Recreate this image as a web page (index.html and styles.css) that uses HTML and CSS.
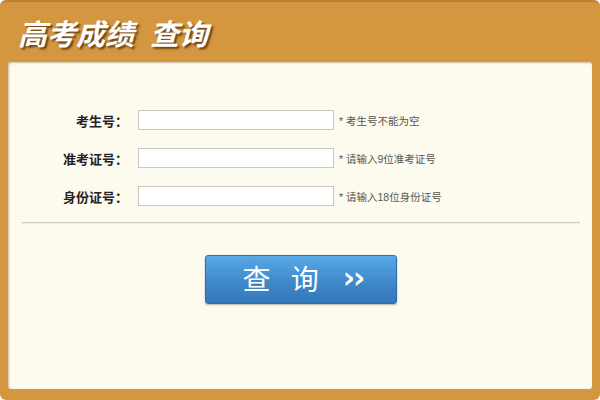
FILE: index.html
```html
<!DOCTYPE html>
<html lang="zh-CN">
<head>
  <meta charset="UTF-8" />
  <title>高考成绩查询</title>
  <link rel="stylesheet" href="styles.css">
</head>
<body>

  <div class="frame">
    <header>
      <h1>高考成绩&nbsp;&nbsp;查询</h1>
    </header>

    <div class="panel">
      <form class="query-form">
        <label for="ksh">考生号：</label>
        <input type="text" id="ksh">
        <span class="hint">* 考生号不能为空</span>

        <label for="zkzh">准考证号：</label>
        <input type="text" id="zkzh">
        <span class="hint">* 请输入9位准考证号</span>

        <label for="sfzh">身份证号：</label>
        <input type="text" id="sfzh">
        <span class="hint">* 请输入18位身份证号</span>
      </form>

      <hr class="divider">

      <button class="query-btn" type="button">查<span class="sp"></span>询<span class="arrows">&rsaquo;&rsaquo;</span></button>
    </div>
  </div>

</body>
</html>
```

FILE: styles.css
```css
body {
  margin: 0;
  font-family: "Liberation Sans", "Noto Sans CJK SC", sans-serif;
  background: #ffffff;
}

.frame {
  width: 600px;
  height: 400px;
  box-sizing: border-box;
  padding: 0 8px 11px;
  background: #d4963f;
  border-top: 2px solid #b98033;
  border-radius: 6px;
  display: flex;
  flex-direction: column;
}

header {
  height: 60px;
  display: flex;
  align-items: center;
}

header h1 {
  margin: 0 0 0 10px;
  font-size: 29px;
  font-style: italic;
  font-weight: bold;
  color: #ffffff;
  text-shadow: 2px 2px 2px rgba(70, 40, 10, 0.75);
}

.panel {
  flex: 1;
  background: #fdfaee;
  border-radius: 3px;
  box-shadow: inset 1px 1px 2px rgba(120, 80, 20, 0.35);
  padding-top: 48px;
  display: flex;
  flex-direction: column;
}

.query-form {
  display: grid;
  grid-template-columns: 120px 196px auto;
  column-gap: 10px;
  row-gap: 18px;
  align-items: center;
}

.query-form label {
  text-align: right;
  font-size: 13px;
  font-weight: bold;
  color: #222222;
}

.query-form input {
  height: 20px;
  box-sizing: border-box;
  border: 1px solid #c9c9c4;
  background: #ffffff;
  padding: 0 4px;
}

.hint {
  margin-left: -5px;
  font-size: 10.5px;
  color: #555555;
}

.divider {
  margin: 16px 12px 0 14px;
  border: none;
  border-top: 1px solid #cfcdb8;
  border-bottom: 1px solid #f0eee0;
}

.query-btn {
  align-self: flex-start;
  margin: 31px 0 0 197px;
  width: 192px;
  height: 49px;
  border: 1px solid #2f6fa8;
  border-radius: 3px;
  background: linear-gradient(to bottom, #58a9e6, #3d86c8 60%, #3479b9);
  box-shadow: 0 1px 2px rgba(0, 0, 0, 0.3);
  color: #ffffff;
  font-family: "Noto Sans CJK SC", sans-serif;
  font-size: 28px;
  padding: 0 0 4px 4px;
  white-space: nowrap;
  cursor: pointer;
}

.sp {
  display: inline-block;
  width: 20px;
}

.arrows {
  margin-left: 24px;
  font-family: "DejaVu Sans", sans-serif;
  font-weight: bold;
  font-size: 30px;
  letter-spacing: -2px;
  vertical-align: 2px;
}
```
